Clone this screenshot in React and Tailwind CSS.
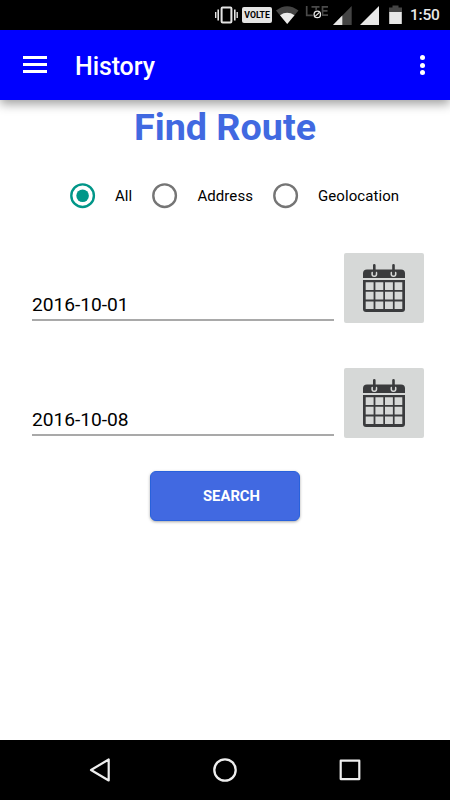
function StatusBar() {
  return (
    <div className="flex h-[30px] shrink-0 items-center bg-black pl-[214px] text-[#e8e8e8]">
      <svg className="h-[30px] w-[25px] shrink-0" viewBox="214 0 25 30" fill="none" stroke="#e4e4e4">
        <rect x="221.6" y="7.6" width="9.8" height="14.8" rx="1" strokeWidth="2" />
        <path d="M218.2 9.5v11M234.8 9.5v11" strokeWidth="1.6" />
        <path d="M215.7 12v6M237.2 12v6" strokeWidth="1.4" />
      </svg>
      <div className="ml-[3px] flex h-[16px] w-[30px] shrink-0 items-center justify-center rounded-[2px] bg-[#e4e4e4]">
        <svg className="h-[16px] w-[30px]" viewBox="0 0 30 16">
          <text x="2.3" y="11" textLength="25.6" lengthAdjust="spacingAndGlyphs" fontFamily="Roboto, sans-serif" fontWeight="700" fontSize="8.4" fill="#000">VOLTE</text>
        </svg>
      </div>
      <svg className="h-[30px] w-[130px] shrink-0" viewBox="272 0 130 30">
        <path d="M276 10.5Q287 2 298.5 10.5L287.2 24z" fill="#444" />
        <path d="M280 15.2Q287 10.5 294.5 15.2L287.2 24z" fill="#ececec" />
        <path d="M306.7 6v9.300h6.500M311.500 6.800h8M316.200 7v5M328 6.800h-5.500v8.400h5.500M322.500 10.800h5" fill="none" stroke="#4a4a4a" strokeWidth="1.7" />
        <circle cx="317.3" cy="14.4" r="4.6" fill="#000" />
        <circle cx="317.3" cy="14.4" r="3.2" fill="none" stroke="#e8e8e8" strokeWidth="1.3" />
        <path d="M315.2 16.4l4.2-4" stroke="#e8e8e8" strokeWidth="1.2" />
        <path d="M333 25L351.7 6v19z" fill="#444" />
        <path d="M333 25L342.3 15.6V25z" fill="#e8e8e8" />
        <path d="M360 25L379 6v19z" fill="#e8e8e8" />
        <path d="M389 7.500h3.500V5.500h6v2h3.500v5h-13z" fill="#444" />
        <path d="M389.2 12h12.6v12h-12.6z" fill="#e8e8e8" />
      </svg>
      <span className="ml-[8px] pt-px text-[15.5px] leading-[29px] font-medium tracking-[-0.2px]">1:50</span>
    </div>
  );
}

function AppBar() {
  return (
    <header className="z-10 flex h-[70px] shrink-0 items-center bg-[#0000ff] pl-[23px] text-white shadow-[0_4px_10px_rgba(0,0,0,0.38)]">
      <div className="mb-px flex h-[17px] w-[24px] flex-col justify-between">
        <span className="h-[3px] bg-white" />
        <span className="h-[3px] bg-white" />
        <span className="h-[3px] bg-white" />
      </div>
      <h1 className="ml-[28px] pt-[3px] text-[25px] leading-[30px] font-medium tracking-[-0.1px]">History</h1>
      <div className="mr-[25px] ml-auto flex flex-col gap-[2.5px]">
        <span className="size-[5px] rounded-full bg-white" />
        <span className="size-[5px] rounded-full bg-white" />
        <span className="size-[5px] rounded-full bg-white" />
      </div>
    </header>
  );
}

function Radio({ label, checked, className }) {
  return (
    <div className={className}>
      <svg className="size-[26px] shrink-0" viewBox="0 0 26 26" fill="none">
        <circle cx="12.6" cy="12.7" r="11.3" stroke={checked ? "#009688" : "#757575"} strokeWidth="2.4" />
        {checked && <circle cx="12.6" cy="12.7" r="6.3" fill="#009688" />}
      </svg>
      <span className="ml-[19px] text-[15px] leading-[20px] tracking-[0.08px]">{label}</span>
    </div>
  );
}

function CalendarIcon() {
  return (
    <svg className="h-[50px] w-[44px]" viewBox="0 0 44 50">
      <path d="M1 15V10.500q0-4 4-4H39q4 0 4 4V15z" fill="#3a3b3d" />
      <path d="M1 17H43V46q0 3-3 3H4q-3 0-3-3z" fill="#3a3b3d" />
      <g fill="#d6d8d7">
        <path d="M3.700 19.300h7.900v7.700H3.700zM13.400 19.300h7.900v7.700h-7.900zM23 19.300h7.900v7.700h-7.900zM32.600 19.300h7.700v7.700h-7.700z" />
        <path d="M3.700 28.800h7.900v7.700H3.700zM13.400 28.800h7.900v7.700h-7.900zM23 28.800h7.900v7.700h-7.900zM32.600 28.800h7.700v7.700h-7.700z" />
        <path d="M3.700 38.400h7.900v7.700H3.700zM13.400 38.400h7.900v7.700h-7.900zM23 38.400h7.900v7.700h-7.900zM32.600 38.400h7.700v7.700h-7.700z" />
      </g>
      <g fill="none" strokeLinecap="round">
        <path d="M10.200 9.500Q9.500 13.300 12.300 13.300Q15.100 13.300 14.400 9.500M29.400 9.500Q28.700 13.300 31.500 13.300Q34.300 13.300 33.600 9.500" stroke="#d6d8d7" strokeWidth="1.6" />
        <path d="M12.300 2.300v7.500M31.500 2.300v7.500" stroke="#3a3b3d" strokeWidth="2.600" />
      </g>
    </svg>
  );
}

function DateRow({ value }) {
  return (
    <div className="flex h-[70px] items-start pl-[32px]">
      <div className="flex h-[68px] w-[302px] items-end border-b-2 border-[#a9a9a9] pb-px text-[19.2px] leading-[26px] tracking-[-0.05px]">
        {value}
      </div>
      <button className="ml-[10px] flex h-[70px] w-[80px] items-center justify-center rounded-[2px] bg-[#d6d8d7] pr-[1px]">
        <CalendarIcon />
      </button>
    </div>
  );
}

function NavigationBar() {
  return (
    <nav className="flex h-[60px] shrink-0 items-center justify-between bg-black px-[87px]">
      <svg className="size-[26px]" viewBox="0 0 26 26" fill="none" stroke="#eee" strokeWidth="2.2" strokeLinejoin="round">
        <path d="M4 13L21.700 2.500v21z" />
      </svg>
      <svg className="size-[26px]" viewBox="0 0 26 26" fill="none" stroke="#eee" strokeWidth="2.300">
        <circle cx="13" cy="13" r="10.700" />
      </svg>
      <svg className="size-[26px]" viewBox="0 0 26 26" fill="none" stroke="#eee" strokeWidth="2.200" strokeLinejoin="round">
        <rect x="3.700" y="3.700" width="18.600" height="18.400" />
      </svg>
    </nav>
  );
}

export default function App() {
  return (
    <div className="flex h-[800px] w-[450px] flex-col overflow-hidden bg-white font-['Roboto',sans-serif] text-black">
      <StatusBar />
      <AppBar />
      <main className="flex flex-1 flex-col">
        <h2 className="mt-[5px] text-center text-[37.7px] leading-[44px] font-bold text-[#4169e1]">Find Route</h2>
        <div className="mt-[34px] flex h-[26px] items-center">
          <Radio label="All" checked className="ml-[70px] flex w-[82.4px] items-center" />
          <Radio label="Address" className="flex w-[120.6px] items-center" />
          <Radio label="Geolocation" className="flex items-center" />
        </div>
        <div className="mt-[44px] flex flex-col gap-[45px]">
          <DateRow value="2016-10-01" />
          <DateRow value="2016-10-08" />
        </div>
        <button className="mt-[33px] ml-[150px] h-[50px] w-[150px] rounded-[6px] border border-[#2861dc] bg-[#4169e1] pt-px pl-[13px] text-[14.8px] font-bold text-white shadow-[0_1px_3px_rgba(0,0,0,0.35)]">
          SEARCH
        </button>
      </main>
      <NavigationBar />
    </div>
  );
}
